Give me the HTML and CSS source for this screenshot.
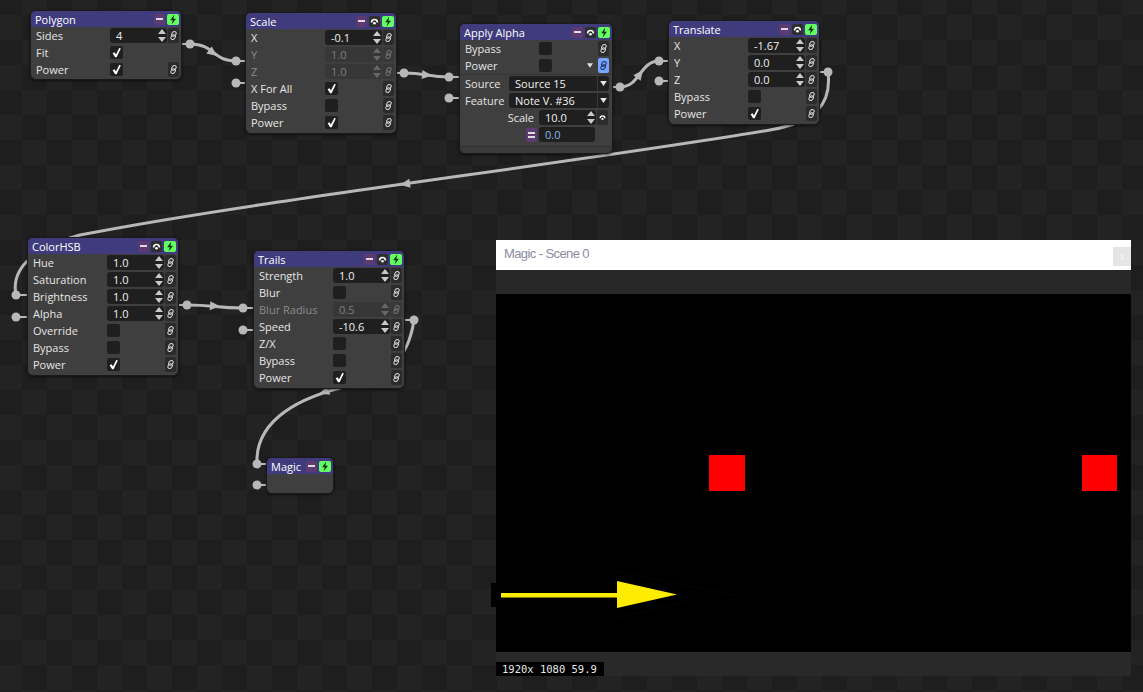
FILE: index.html
```html
<!DOCTYPE html>
<html>
<head>
<meta charset="utf-8">
<link rel="stylesheet" href="styles.css">
</head>
<body>
<svg class="defs" width="0" height="0">
  <symbol id="i-link" viewBox="0 0 10 10">
    <g fill="none" stroke="currentColor" stroke-width="1.2">
      <rect x="3.4" y="0.4" width="4" height="5.6" rx="2" transform="rotate(40 5.4 3.2)"/>
      <rect x="2.6" y="4" width="4" height="5.6" rx="2" transform="rotate(40 4.6 6.8)"/>
    </g>
  </symbol>
  <symbol id="i-check" viewBox="0 0 13 13">
    <path d="M2.6 7.2 L4.6 6.2 L5.9 8.6 L9.4 1.8 L10.8 2.4 L6.6 11.2 L5.1 11.2 Z" fill="#fff"/>
  </symbol>
  <symbol id="i-ear" viewBox="0 0 11 11">
    <path d="M2.6 6.4 A2.9 2.9 0 0 1 8.4 6.4" stroke="#fff" stroke-width="1.6" fill="none"/>
    <circle cx="5.5" cy="7.2" r="1.3" fill="#fff"/>
  </symbol>
  <symbol id="i-bolt" viewBox="0 0 12 11">
    <path d="M7.2 0.6 L3.2 6.2 L5.8 6.2 L4.6 10.6 L9 4.8 L6.4 4.8 Z" fill="#123012"/>
  </symbol>
  <symbol id="i-spin" viewBox="0 0 8 13">
    <path d="M4 0 L8 5 L0 5 Z M0 8 L8 8 L4 13 Z"/>
  </symbol>
  <symbol id="i-dd" viewBox="0 0 8 6">
    <path d="M0 0 H8 L4 6 Z"/>
  </symbol>
</svg>

<div class="stage">
  <svg class="wires" width="1143" height="692" viewBox="0 0 1143 692">
    <g class="stub">
      <line x1="181" y1="44" x2="190" y2="44"/>
      <line x1="236" y1="61" x2="246" y2="61"/>
      <line x1="236" y1="83" x2="246" y2="83"/>
      <line x1="396" y1="73" x2="404" y2="73"/>
      <line x1="449" y1="77" x2="459" y2="77"/>
      <line x1="449" y1="98" x2="459" y2="98"/>
      <line x1="613" y1="87" x2="620" y2="87"/>
      <line x1="659" y1="61" x2="668" y2="61"/>
      <line x1="659" y1="81" x2="668" y2="81"/>
      <line x1="819" y1="72" x2="828" y2="72"/>
      <line x1="16" y1="295" x2="27" y2="295"/>
      <line x1="16" y1="317" x2="27" y2="317"/>
      <line x1="179" y1="305" x2="187" y2="305"/>
      <line x1="243" y1="308" x2="253" y2="308"/>
      <line x1="243" y1="330" x2="253" y2="330"/>
      <line x1="404" y1="320" x2="414" y2="320"/>
      <line x1="257" y1="464" x2="266" y2="464"/>
      <line x1="257" y1="485" x2="266" y2="485"/>
    </g>
    <g class="wire">
      <path d="M190 44 C215 44 212 61 236 61"/>
      <path d="M404 73 C427 73 427 77 449 77"/>
      <path d="M620 87 C640 87 640 61 659 61"/>
      <path d="M828 72 C832 105 815 122 770 130 C560 165 260 200 80 235 C40 246 10 265 16 295"/>
      <path d="M187 305 C215 305 215 308 243 308"/>
      <path d="M414 320 C408 360 390 376 340 388 C290 401 255 425 257 464"/>
    </g>
    <g class="dot">
      <circle cx="190" cy="44" r="4.5"/>
      <circle cx="236" cy="61" r="4.5"/>
      <circle cx="236" cy="83" r="4.5"/>
      <circle cx="404" cy="73" r="4.5"/>
      <circle cx="449" cy="77" r="4.5"/>
      <circle cx="449" cy="98" r="4.5"/>
      <circle cx="620" cy="87" r="4.5"/>
      <circle cx="659" cy="61" r="4.5"/>
      <circle cx="659" cy="81" r="4.5"/>
      <circle cx="828" cy="72" r="4.5"/>
      <circle cx="16" cy="295" r="4.5"/>
      <circle cx="16" cy="317" r="4.5"/>
      <circle cx="187" cy="305" r="4.5"/>
      <circle cx="243" cy="308" r="4.5"/>
      <circle cx="243" cy="330" r="4.5"/>
      <circle cx="414" cy="320" r="4.5"/>
      <circle cx="257" cy="464" r="4.5"/>
      <circle cx="257" cy="485" r="4.5"/>
      <polygon points="-5,-4.5 5,0 -5,4.5" transform="translate(213 53) rotate(38)"/>
      <polygon points="-5,-4.5 5,0 -5,4.5" transform="translate(427 75) rotate(5)"/>
      <polygon points="-5,-4.5 5,0 -5,4.5" transform="translate(640 74) rotate(-53)"/>
      <polygon points="-5,-4.5 5,0 -5,4.5" transform="translate(405 184) rotate(172)"/>
      <polygon points="-5,-4.5 5,0 -5,4.5" transform="translate(215 306) rotate(4)"/>
      <polygon points="-5,-4.5 5,0 -5,4.5" transform="translate(324 392) rotate(162)"/>
    </g>
  </svg>

  <!-- Polygon -->
  <div class="node polygon">
    <div class="hd"><span class="title">Polygon</span><span class="hb min"></span><span class="hb go"><svg><use href="#i-bolt"/></svg></span></div>
    <div class="row"><span class="lbl">Sides</span><span class="num"><span>4</span><svg class="spin"><use href="#i-spin"/></svg></span><span class="link"><svg><use href="#i-link"/></svg></span></div>
    <div class="row"><span class="lbl">Fit</span><span class="chk"><svg><use href="#i-check"/></svg></span></div>
    <div class="row"><span class="lbl">Power</span><span class="chk"><svg><use href="#i-check"/></svg></span><span class="link"><svg><use href="#i-link"/></svg></span></div>
  </div>

  <!-- Scale -->
  <div class="node scale">
    <div class="hd"><span class="title">Scale</span><span class="hb min"></span><span class="hb ear"><svg><use href="#i-ear"/></svg></span><span class="hb go"><svg><use href="#i-bolt"/></svg></span></div>
    <div class="row"><span class="lbl">X</span><span class="num"><span>-0.1</span><svg class="spin"><use href="#i-spin"/></svg></span><span class="link"><svg><use href="#i-link"/></svg></span></div>
    <div class="row dis"><span class="lbl">Y</span><span class="num"><span>1.0</span><svg class="spin"><use href="#i-spin"/></svg></span><span class="link"><svg><use href="#i-link"/></svg></span></div>
    <div class="row dis"><span class="lbl">Z</span><span class="num"><span>1.0</span><svg class="spin"><use href="#i-spin"/></svg></span><span class="link"><svg><use href="#i-link"/></svg></span></div>
    <div class="row"><span class="lbl">X For All</span><span class="chk"><svg><use href="#i-check"/></svg></span><span class="link"><svg><use href="#i-link"/></svg></span></div>
    <div class="row"><span class="lbl">Bypass</span><span class="chk"></span><span class="link"><svg><use href="#i-link"/></svg></span></div>
    <div class="row"><span class="lbl">Power</span><span class="chk"><svg><use href="#i-check"/></svg></span><span class="link"><svg><use href="#i-link"/></svg></span></div>
  </div>

  <!-- Apply Alpha -->
  <div class="node alpha">
    <div class="hd"><span class="title">Apply Alpha</span><span class="hb min"></span><span class="hb ear"><svg><use href="#i-ear"/></svg></span><span class="hb go"><svg><use href="#i-bolt"/></svg></span></div>
    <div class="row"><span class="lbl">Bypass</span><span class="chk"></span><span class="link"><svg><use href="#i-link"/></svg></span></div>
    <div class="row"><span class="lbl">Power</span><span class="chk"></span><svg class="mini-dd"><use href="#i-dd"/></svg><span class="link blue"><svg><use href="#i-link"/></svg></span></div>
    <div class="sep"></div>
    <div class="row"><span class="lbl short">Source</span><span class="dd"><span>Source 15</span><span class="dd-btn"><svg><use href="#i-dd"/></svg></span></span></div>
    <div class="row"><span class="lbl short">Feature</span><span class="dd"><span>Note V. #36</span><span class="dd-btn"><svg><use href="#i-dd"/></svg></span></span></div>
    <div class="row"><span class="lbl right">Scale</span><span class="num"><span>10.0</span><svg class="spin"><use href="#i-spin"/></svg></span><span class="link"><svg><use href="#i-ear"/></svg></span></div>
    <div class="row"><span class="lbl right"><span class="eq"></span></span><span class="num val"><span>0.0</span></span></div>
    <div class="foot"></div>
  </div>

  <!-- Translate -->
  <div class="node translate">
    <div class="hd"><span class="title">Translate</span><span class="hb min"></span><span class="hb ear"><svg><use href="#i-ear"/></svg></span><span class="hb go"><svg><use href="#i-bolt"/></svg></span></div>
    <div class="row"><span class="lbl">X</span><span class="num"><span>-1.67</span><svg class="spin"><use href="#i-spin"/></svg></span><span class="link"><svg><use href="#i-link"/></svg></span></div>
    <div class="row"><span class="lbl">Y</span><span class="num"><span>0.0</span><svg class="spin"><use href="#i-spin"/></svg></span><span class="link"><svg><use href="#i-link"/></svg></span></div>
    <div class="row"><span class="lbl">Z</span><span class="num"><span>0.0</span><svg class="spin"><use href="#i-spin"/></svg></span><span class="link"><svg><use href="#i-link"/></svg></span></div>
    <div class="row"><span class="lbl">Bypass</span><span class="chk"></span><span class="link"><svg><use href="#i-link"/></svg></span></div>
    <div class="row"><span class="lbl">Power</span><span class="chk"><svg><use href="#i-check"/></svg></span><span class="link"><svg><use href="#i-link"/></svg></span></div>
  </div>

  <!-- ColorHSB -->
  <div class="node hsb">
    <div class="hd"><span class="title">ColorHSB</span><span class="hb min"></span><span class="hb ear"><svg><use href="#i-ear"/></svg></span><span class="hb go"><svg><use href="#i-bolt"/></svg></span></div>
    <div class="row"><span class="lbl">Hue</span><span class="num"><span>1.0</span><svg class="spin"><use href="#i-spin"/></svg></span><span class="link"><svg><use href="#i-link"/></svg></span></div>
    <div class="row"><span class="lbl">Saturation</span><span class="num"><span>1.0</span><svg class="spin"><use href="#i-spin"/></svg></span><span class="link"><svg><use href="#i-link"/></svg></span></div>
    <div class="row"><span class="lbl">Brightness</span><span class="num"><span>1.0</span><svg class="spin"><use href="#i-spin"/></svg></span><span class="link"><svg><use href="#i-link"/></svg></span></div>
    <div class="row"><span class="lbl">Alpha</span><span class="num"><span>1.0</span><svg class="spin"><use href="#i-spin"/></svg></span><span class="link"><svg><use href="#i-link"/></svg></span></div>
    <div class="row"><span class="lbl">Override</span><span class="chk"></span><span class="link"><svg><use href="#i-link"/></svg></span></div>
    <div class="row"><span class="lbl">Bypass</span><span class="chk"></span><span class="link"><svg><use href="#i-link"/></svg></span></div>
    <div class="row"><span class="lbl">Power</span><span class="chk"><svg><use href="#i-check"/></svg></span><span class="link"><svg><use href="#i-link"/></svg></span></div>
  </div>

  <!-- Trails -->
  <div class="node trails">
    <div class="hd"><span class="title">Trails</span><span class="hb min"></span><span class="hb ear"><svg><use href="#i-ear"/></svg></span><span class="hb go"><svg><use href="#i-bolt"/></svg></span></div>
    <div class="row"><span class="lbl">Strength</span><span class="num"><span>1.0</span><svg class="spin"><use href="#i-spin"/></svg></span><span class="link"><svg><use href="#i-link"/></svg></span></div>
    <div class="row"><span class="lbl">Blur</span><span class="chk"></span><span class="link"><svg><use href="#i-link"/></svg></span></div>
    <div class="row dis"><span class="lbl">Blur Radius</span><span class="num"><span>0.5</span><svg class="spin"><use href="#i-spin"/></svg></span><span class="link"><svg><use href="#i-link"/></svg></span></div>
    <div class="row"><span class="lbl">Speed</span><span class="num"><span>-10.6</span><svg class="spin"><use href="#i-spin"/></svg></span><span class="link"><svg><use href="#i-link"/></svg></span></div>
    <div class="row"><span class="lbl">Z/X</span><span class="chk"></span><span class="link"><svg><use href="#i-link"/></svg></span></div>
    <div class="row"><span class="lbl">Bypass</span><span class="chk"></span><span class="link"><svg><use href="#i-link"/></svg></span></div>
    <div class="row"><span class="lbl">Power</span><span class="chk"><svg><use href="#i-check"/></svg></span><span class="link"><svg><use href="#i-link"/></svg></span></div>
  </div>

  <!-- Magic -->
  <div class="node magic">
    <div class="hd"><span class="title">Magic</span><span class="hb min"></span><span class="hb go"><svg><use href="#i-bolt"/></svg></span></div>
    <div class="empty"></div>
  </div>

  <!-- Output window -->
  <div class="win">
    <div class="win-title"><span class="win-name">Magic - Scene 0</span><span class="close">x</span></div>
    <div class="win-tool"></div>
    <div class="win-view">
      <div class="sq sq1"></div>
      <div class="sq sq2"></div>
    </div>
    <div class="win-status"><span class="status">1920x 1080 59.9</span></div>
  </div>

  <svg class="overlay" width="1143" height="692" viewBox="0 0 1143 692">
    <g stroke="#1c1a00" stroke-width="1" stroke-dasharray="1 3">
      <line x1="612" y1="571" x2="735" y2="595"/>
      <line x1="606" y1="620" x2="700" y2="598"/>
    </g>
    <rect x="491" y="583" width="5" height="24" fill="#000"/>
    <rect x="501" y="593" width="117" height="4.5" fill="#ffec00"/>
    <polygon points="617,581 677,594.5 617,608" fill="#ffec00"/>
  </svg>
</div>
</body>
</html>
```

FILE: styles.css
```css
html, body {
  margin: 0;
  padding: 0;
}
body {
  width: 1143px;
  height: 692px;
  overflow: hidden;
  background-color: #1e1e1f;
  background-image: conic-gradient(#232324 0 25%, transparent 0 50%, #232324 0 75%, transparent 0);
  background-size: 50px 50px;
  background-position: 22px 15px;
  font-family: "Open Sans", "Noto Sans", sans-serif;
  font-size: 11px;
  color: #e6e6e6;
}
.defs {
  position: absolute;
  width: 0;
  height: 0;
}
.stage {
  position: relative;
  width: 1143px;
  height: 692px;
}
.wires, .overlay {
  position: absolute;
  left: 0;
  top: 0;
}
.overlay {
  pointer-events: none;
}
.wire path {
  fill: none;
  stroke: #b8b8b8;
  stroke-width: 3;
  stroke-linecap: round;
}
.stub line {
  stroke: #b8b8b8;
  stroke-width: 2;
}
.dot circle, .dot polygon {
  fill: #b8b8b8;
}

/* nodes */
.node {
  position: absolute;
  box-sizing: border-box;
  width: 152px;
  background: #3f3f3f;
  border: 1px solid #1a1a1a;
  border-radius: 6px;
  overflow: hidden;
  padding-bottom: 2px;
  box-shadow: 0 1px 3px rgba(0, 0, 0, 0.55);
}
.polygon { left: 30px; top: 10px; padding-bottom: 1px; }
.scale { left: 245px; top: 12px; }
.alpha { left: 459px; top: 23px; width: 154px; padding-bottom: 0; }
.translate { left: 668px; top: 20px; }
.hsb { left: 27px; top: 237px; }
.trails { left: 253px; top: 250px; }
.magic { left: 266px; top: 457px; width: 68px; padding-bottom: 0; }

.hd {
  height: 16px;
  background: #403b7c;
  display: flex;
  align-items: center;
  padding: 0 2px 0 4px;
}
.title {
  flex: 1;
  color: #ffffff;
  white-space: nowrap;
}
.hb {
  width: 11px;
  height: 11px;
  border-radius: 2px;
  display: flex;
  align-items: center;
  justify-content: center;
  flex: none;
}
.hb + .hb { margin-left: 2px; }
.hb svg { width: 11px; height: 11px; }
.hb.min { background: #5d3a72; }
.hb.min::after {
  content: "";
  width: 7px;
  height: 2px;
  background: #dcdcdc;
}
.hb.ear { background: #2e2e2e; }
.hb.go { background: #62ff62; width: 12px; }
.hb.go svg { width: 12px; }

.row {
  height: 17px;
  display: flex;
  align-items: center;
  padding: 0 2px 0 5px;
}
.lbl {
  width: 74px;
  flex: none;
  white-space: nowrap;
  color: #e6e6e6;
}
.row.dis .lbl { color: #8a8a8a; }
.num {
  width: 57px;
  height: 15px;
  box-sizing: border-box;
  background: #1f1f1f;
  border-radius: 3px;
  display: flex;
  align-items: center;
  padding: 0 1px 0 6px;
  color: #f0f0f0;
  flex: none;
}
.num span { flex: 1; }
.spin {
  width: 8px;
  height: 13px;
  fill: #c8c8c8;
}
.row.dis .num { background: #373737; color: #7e7e7e; }
.row.dis .spin { fill: #666; }
.row.dis .link { background: #383838; color: #707070; }
.link {
  width: 11px;
  height: 15px;
  margin-left: auto;
  background: #2b2b2b;
  border-radius: 2px;
  display: flex;
  align-items: center;
  justify-content: center;
  color: #d0d0d0;
  flex: none;
}
.link svg { width: 9px; height: 9px; }
.link.blue { background: #78a4ff; color: #1c2c66; margin-left: 2px; }
.chk {
  width: 13px;
  height: 13px;
  background: #1f1f1f;
  border-radius: 2px;
  flex: none;
  display: flex;
}
.chk svg { width: 13px; height: 13px; }

/* apply alpha specifics */
.alpha .row { padding-right: 3px; }
.mini-dd {
  width: 6px;
  height: 5px;
  fill: #e0e0e0;
  margin-left: auto;
  margin-right: 3px;
}
.sep {
  height: 1px;
  background: #353535;
}
.lbl.short { width: 44px; }
.lbl.right {
  width: 69px;
  text-align: right;
  padding-right: 5px;
  display: flex;
  justify-content: flex-end;
}
.dd {
  flex: 1;
  height: 15px;
  background: #1f1f1f;
  border-radius: 3px;
  display: flex;
  align-items: center;
  padding-left: 6px;
  color: #f0f0f0;
}
.dd span:first-child { flex: 1; }
.dd-btn {
  width: 11px;
  height: 15px;
  border-left: 1px solid #3a3a3a;
  display: flex;
  align-items: center;
  justify-content: center;
}
.dd-btn svg { width: 7px; height: 5px; fill: #e6e6e6; }
.alpha .num + .link { margin-left: 1px; }
.eq {
  width: 11px;
  height: 14px;
  margin-right: -3px;
  background: #5d3a72;
  border-radius: 2px;
  display: flex;
  flex-direction: column;
  align-items: center;
  justify-content: center;
  gap: 2px;
}
.eq::before, .eq::after {
  content: "";
  width: 7px;
  height: 2px;
  background: #dcdcdc;
}
.num.val { width: 56px; color: #8fb2ea; }
.foot {
  height: 6px;
  margin-top: 3px;
  border-top: 1px solid #2f2f2f;
  background: #3b3b3b;
}
.empty { height: 19px; }

/* output window */
.win {
  position: absolute;
  left: 496px;
  top: 240px;
  width: 635px;
  height: 436px;
  display: flex;
  flex-direction: column;
  background: #000;
}
.win-title {
  height: 30px;
  background: #ffffff;
  display: flex;
  align-items: flex-start;
  padding-left: 8px;
}
.win-name {
  flex: 1;
  margin-top: 6px;
  font-family: "Liberation Sans", sans-serif;
  font-size: 13px;
  letter-spacing: -0.6px;
  color: #8c8ca0;
}
.close {
  width: 18px;
  height: 19px;
  margin-top: 7px;
  background: #e5e5e5;
  color: #f6f6f6;
  font-family: "Liberation Sans", sans-serif;
  font-size: 10px;
  display: flex;
  align-items: center;
  justify-content: center;
}
.win-tool {
  height: 24px;
  background: #282828;
}
.win-view {
  flex: 1;
  position: relative;
  background: #000;
}
.sq {
  position: absolute;
  top: 161px;
  width: 36px;
  height: 36px;
  background: #ff0000;
}
.sq1 { left: 213px; }
.sq2 { left: 586px; width: 35px; }
.win-status {
  height: 24px;
  background: #292929;
  display: flex;
  align-items: flex-end;
}
.status {
  width: 108px;
  height: 14px;
  box-sizing: border-box;
  padding-left: 6px;
  background: #000;
  color: #e8e8e8;
  font-family: "DejaVu Sans Mono", monospace;
  font-size: 10.5px;
  line-height: 14px;
  white-space: nowrap;
}
```
